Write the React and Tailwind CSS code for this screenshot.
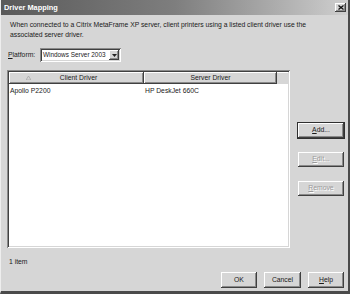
// App.jsx
const raised =
  "shadow-[inset_-1px_-1px_0_#404040,inset_1px_1px_0_#ffffff,inset_-2px_-2px_0_#8a8a8a]";
const sunken =
  "shadow-[inset_1px_1px_0_#8a8a8a,inset_-1px_-1px_0_#ffffff,inset_2px_2px_0_#404040,inset_-2px_-2px_0_#d6d6d6]";

function Btn({ children, disabled, focus, className = "" }) {
  return (
    <div
      className={`flex items-center justify-center bg-[#d6d6d6] ${raised} ${
        focus ? "outline outline-1 outline-[#303030]" : ""
      } ${disabled ? "text-[#9a9a9a] [text-shadow:1px_1px_0_#ffffff]" : "text-[#1a1a1a]"} ${className}`}
    >
      {children}
    </div>
  );
}

export default function App() {
  return (
    <div className="w-[350px] h-[294px] flex flex-col bg-[#d6d6d6] border-l border-l-[#eeeeee] border-r-2 border-r-[#4a4a4a] border-b-[3px] border-b-[#4a4a4a] font-['Liberation_Sans',sans-serif] text-[6.8px] text-[#1a1a1a] overflow-hidden">
      {/* title bar */}
      <div className="h-[15px] shrink-0 flex items-center justify-between pl-[3px] pr-[2px] bg-gradient-to-r from-[#5a5a5a] via-[#7e7e7e] to-[#cfcfcf]">
        <span className="text-white font-bold text-[7.4px]">Driver Mapping</span>
        <div className={`w-[11px] h-[9px] flex items-center justify-center bg-[#d6d6d6] ${raised}`}>
          <svg width="6" height="5" viewBox="0 0 6 5">
            <path d="M0.5 0.5 L5.5 4.5 M5.5 0.5 L0.5 4.5" stroke="#111" strokeWidth="1.3" />
          </svg>
        </div>
      </div>

      <div className="pl-[9px] pt-[5px] leading-[9.5px]">
        <p>When connected to a Citrix MetaFrame XP server, client printers using a listed client driver use the</p>
        <p>associated server driver.</p>
      </div>

      {/* platform */}
      <div className="flex items-center mt-[9px] pl-[7px] h-[14px]">
        <span className="w-[32px]">
          <span className="underline">P</span>latform:
        </span>
        <div className={`w-[81px] h-[14px] bg-white flex items-center pl-[3px] pr-[2px] ${sunken}`}>
          <span className="flex-1 whitespace-nowrap text-[6.4px]">Windows Server 2003</span>
          <div className={`w-[10px] h-[10px] bg-[#d6d6d6] flex items-center justify-center ${raised}`}>
            <svg width="5" height="3" viewBox="0 0 5 3">
              <path d="M0 0 H5 L2.5 3 Z" fill="#222" />
            </svg>
          </div>
        </div>
      </div>

      {/* list and side buttons */}
      <div className="flex mt-[8px] pl-[6px] h-[178px]">
        <div className={`w-[283px] h-full bg-white p-[2px] ${sunken}`}>
          <div className="flex h-[12px] bg-[#d6d6d6]">
            <div className={`w-[135px] flex items-center justify-center gap-[3px] ${raised}`}>
              <svg width="5" height="4" viewBox="0 0 5 4" className="-ml-[30px] mr-[26px]">
                <path d="M2.5 0 L5 4 H0 Z" fill="none" stroke="#a8a8a8" strokeWidth="0.8" />
              </svg>
              <span>Client Driver</span>
            </div>
            <div className={`w-[133px] flex items-center justify-center ${raised}`}>Server Driver</div>
            <div className="flex-1 border-t border-t-[#ffffff]" />
          </div>
          <div className="flex items-center h-[14px] pl-[1px]">
            <span className="w-[135px]">Apollo P2200</span>
            <span>HP DeskJet 660C</span>
          </div>
        </div>
        <div className="flex flex-col pl-[8px] pt-[53px] gap-[14px]">
          <Btn focus className="w-[46px] h-[15px]">
            <span>
              <span className="underline">A</span>dd...
            </span>
          </Btn>
          <Btn disabled className="w-[46px] h-[15px]">
            <span>
              <span className="underline">E</span>dit...
            </span>
          </Btn>
          <Btn disabled className="w-[46px] h-[15px]">
            <span>
              <span className="underline">R</span>emove
            </span>
          </Btn>
        </div>
      </div>

      <div className="pl-[8px] mt-[9px] leading-[9px]">1 item</div>

      <div className="flex justify-end gap-[7px] pr-[4px] mt-[6px]">
        <Btn className="w-[36px] h-[16px]">OK</Btn>
        <Btn className="w-[37px] h-[16px]">Cancel</Btn>
        <Btn className="w-[36px] h-[16px]">
          <span>
            <span className="underline">H</span>elp
          </span>
        </Btn>
      </div>
    </div>
  );
}
